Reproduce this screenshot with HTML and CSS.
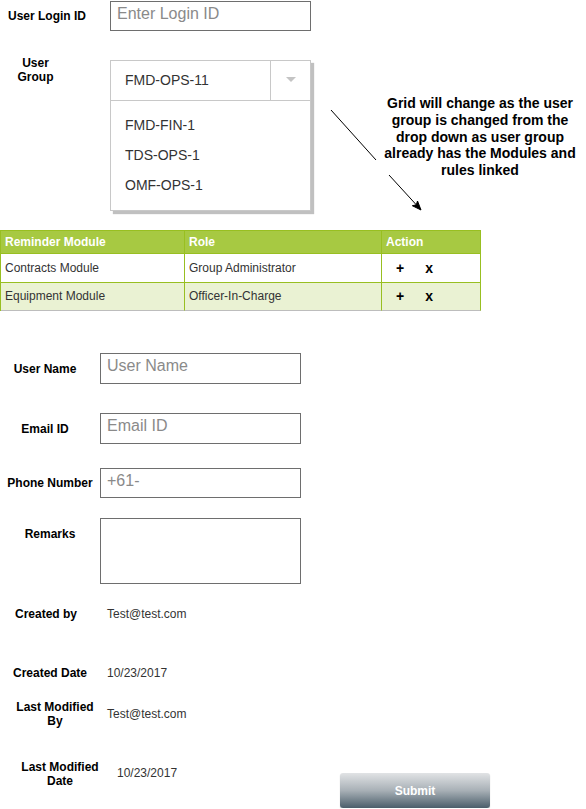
FILE: index.html
```html
<!DOCTYPE html>
<html>
<head>
<meta charset="utf-8">
<title>User Setup</title>
<link rel="stylesheet" href="styles.css">
</head>
<body>
<div class="page">
  <section class="top">
    <div class="top-left">
      <div class="login-row">
        <div class="login-label">User Login ID</div>
        <div class="field"><span class="ph">Enter Login ID</span></div>
      </div>
      <div class="group-row">
        <div class="group-label">User<br>Group</div>
        <div class="dropdown">
          <div class="dd-head">
            <div class="dd-value">FMD-OPS-11</div>
            <div class="dd-arrow"><span class="tri"></span></div>
          </div>
          <ul class="dd-list">
            <li>FMD-FIN-1</li>
            <li>TDS-OPS-1</li>
            <li>OMF-OPS-1</li>
          </ul>
        </div>
      </div>
    </div>
    <p class="note">Grid will change as the user<br>group is changed from the<br>drop down as user group<br>already has the Modules and<br>rules linked</p>
    <svg class="connector" width="120" height="120" viewBox="0 0 120 120">
      <line x1="11" y1="10" x2="56" y2="60" stroke="#000" stroke-width="1"/>
      <line x1="69" y1="75" x2="96.3" y2="104.8" stroke="#000" stroke-width="1"/>
      <polygon points="101,110 92.35,105.72 96.3,104.8 97.51,101" fill="#000" stroke="#000" stroke-width="1"/>
    </svg>
  </section>

  <table class="grid">
    <thead>
      <tr><th class="c1">Reminder Module</th><th class="c2">Role</th><th class="c3">Action</th></tr>
    </thead>
    <tbody>
      <tr class="r1"><td>Contracts Module</td><td>Group Administrator</td><td class="act"><span class="plus">+</span><span class="del">x</span></td></tr>
      <tr class="r2"><td>Equipment Module</td><td>Officer-In-Charge</td><td class="act"><span class="plus">+</span><span class="del">x</span></td></tr>
    </tbody>
  </table>

  <section class="form">
    <div class="f-row row-name">
      <div class="f-label shift-left">User Name</div>
      <div class="field field-tall"><span class="ph">User Name</span></div>
    </div>
    <div class="f-row row-email">
      <div class="f-label shift-left">Email ID</div>
      <div class="field field-tall"><span class="ph">Email ID</span></div>
    </div>
    <div class="f-row row-phone">
      <div class="f-label">Phone Number</div>
      <div class="field"><span class="ph">+61-</span></div>
    </div>
    <div class="f-row row-remarks">
      <div class="f-label remarks-label">Remarks</div>
      <div class="field field-area"></div>
    </div>
    <div class="f-row row-created">
      <div class="f-label shift-left-s">Created by</div>
      <div class="value">Test@test.com</div>
    </div>
    <div class="f-row row-cdate">
      <div class="f-label">Created Date</div>
      <div class="value">10/23/2017</div>
    </div>
    <div class="f-row row-modby">
      <div class="f-label shift-right">Last Modified<br>By</div>
      <div class="value">Test@test.com</div>
    </div>
    <div class="f-row row-moddate">
      <div class="f-label shift-right-l">Last Modified<br>Date</div>
      <div class="value value-far">10/23/2017</div>
      <button class="submit" type="button">Submit</button>
    </div>
  </section>
</div>
</body>
</html>
```

FILE: styles.css
```css
html, body {
  margin: 0;
  padding: 0;
  background: #ffffff;
}

body {
  font-family: "Liberation Sans", Arial, Helvetica, sans-serif;
  color: #000;
}

.page {
  width: 586px;
}

/* ---------- top area ---------- */
.top {
  position: relative;
  display: flex;
  align-items: flex-start;
}

.top-left {
  width: 320px;
}

.login-row {
  display: flex;
  padding-top: 1px;
}

.login-label {
  width: 110px;
  box-sizing: border-box;
  padding-left: 8px;
  font-size: 12px;
  font-weight: bold;
  line-height: 30px;
}

.field {
  box-sizing: border-box;
  width: 201px;
  height: 30px;
  border: 1px solid #6e6e6e;
  padding: 2px 6px 0;
  font-size: 16px;
  line-height: 20px;
  color: #8a8a8a;
  background: #fff;
}

.field-tall {
  height: 31px;
}

.field-area {
  height: 66px;
}

.group-row {
  display: flex;
  align-items: flex-start;
  margin-top: 29px;
}

.group-label {
  width: 71px;
  margin-right: 39px;
  margin-top: -4px;
  text-align: center;
  font-size: 12px;
  font-weight: bold;
  line-height: 14px;
}

.dropdown {
  box-sizing: border-box;
  width: 201px;
  height: 151px;
  border: 1px solid #c8c8c8;
  box-shadow: 3px 3px 1px #c0c0c0;
  background: #fff;
}

.dd-head {
  box-sizing: border-box;
  display: flex;
  height: 40px;
  border-bottom: 1px solid #c8c8c8;
}

.dd-value {
  flex: 1;
  padding-left: 14px;
  font-size: 14px;
  line-height: 39px;
  color: #333;
}

.dd-arrow {
  box-sizing: border-box;
  width: 40px;
  border-left: 1px solid #c8c8c8;
  display: flex;
  align-items: center;
  justify-content: center;
}

.tri {
  width: 0;
  height: 0;
  border-left: 5px solid transparent;
  border-right: 5px solid transparent;
  border-top: 5px solid #c4c4c4;
  margin-top: -2px;
}

.dd-list {
  list-style: none;
  margin: 0;
  padding: 9px 0 0 14px;
}

.dd-list li {
  font-size: 14px;
  line-height: 30px;
  color: #333;
}

.note {
  margin: 95px 0 0 55px;
  width: 210px;
  text-align: center;
  font-size: 14px;
  font-weight: bold;
  line-height: 16.8px;
}

.connector {
  position: absolute;
  left: 320px;
  top: 100px;
}

/* ---------- grid ---------- */
.grid {
  margin-top: 19px;
  border-collapse: separate;
  border-spacing: 0;
  table-layout: fixed;
  width: 481px;
  border-top: 1px solid #98bf21;
  border-left: 1px solid #98bf21;
  font-size: 12px;
}

.grid th,
.grid td {
  box-sizing: border-box;
  padding: 0 0 0 4px;
  text-align: left;
  border-right: 1px solid #98bf21;
  border-bottom: 1px solid #98bf21;
  white-space: nowrap;
}

.grid .c1 { width: 184px; }
.grid .c2 { width: 197px; }
.grid .c3 { width: 99px; }

.grid th {
  background: #a7c942;
  color: #fff;
  font-weight: bold;
  line-height: 22px;
}

.grid td {
  color: #333;
}

.grid .r1 td {
  line-height: 28px;
  background: #fff;
}

.grid .r2 td {
  line-height: 27px;
  background: #eaf2d3;
  border-bottom-color: #bdbdbd;
}

.grid td.act {
  padding-left: 14px;
  color: #000;
  font-size: 14px;
  font-weight: bold;
}

.del {
  margin-left: 21px;
}

/* ---------- form ---------- */
.form {
  margin-top: 42px;
}

.f-row {
  display: flex;
  align-items: center;
}

.f-label {
  box-sizing: border-box;
  width: 100px;
  flex: none;
  text-align: center;
  font-size: 12px;
  font-weight: bold;
  line-height: 14px;
}

.shift-left { padding-right: 10px; }
.shift-left-s { padding-right: 8px; }
.shift-right { padding-left: 10px; }
.shift-right-l { padding-left: 20px; }

.row-name { height: 31px; }

.row-email { margin-top: 29px; height: 31px; }

.row-phone { margin-top: 24px; height: 30px; }

.row-remarks {
  margin-top: 20px;
  align-items: flex-start;
}

.remarks-label {
  margin-top: 9px;
}

.value {
  margin-left: 7px;
  font-size: 12px;
  line-height: 14px;
  color: #333;
}

.row-created { margin-top: 23px; }
.row-cdate { margin-top: 45px; }
.row-modby { margin-top: 20px; }

.row-moddate {
  margin-top: 32px;
  align-items: flex-start;
}

.value-far {
  margin-left: 17px;
  margin-top: 6px;
}

.submit {
  margin: 13px 96px 0 auto;
  width: 150px;
  height: 35px;
  padding: 0;
  border: none;
  border-radius: 3px;
  background: linear-gradient(to bottom, #e1e3e5 0%, #a8b0b6 50%, #4b5e6b 100%);
  box-shadow: 0 1px 1px rgba(0, 0, 0, 0.25);
  color: #fff;
  font-family: "Liberation Sans", Arial, Helvetica, sans-serif;
  font-size: 12px;
  font-weight: bold;
}
```
